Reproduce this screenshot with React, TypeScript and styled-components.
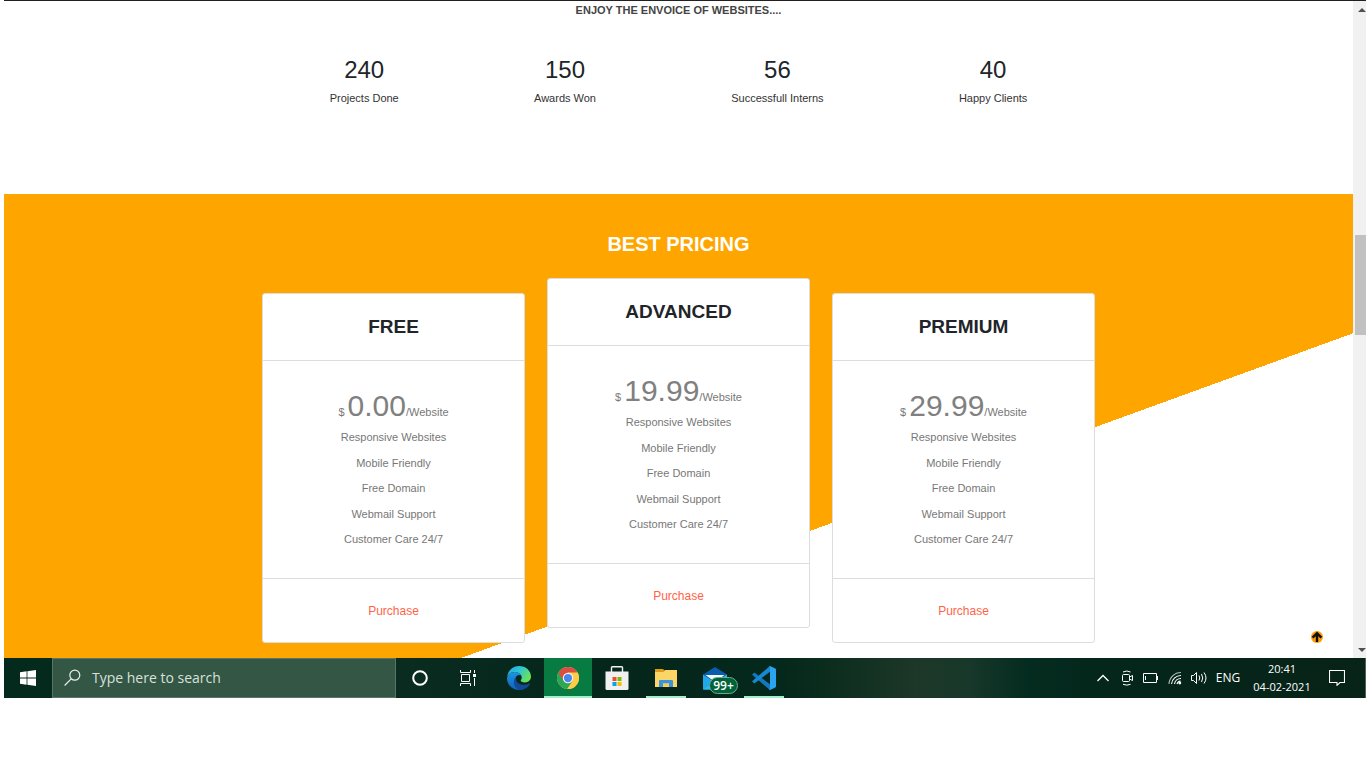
import React from "react";
import styled, { createGlobalStyle, css } from "styled-components";

const GlobalStyle = createGlobalStyle`
  *, *::before, *::after { box-sizing: border-box; }
  body {
    margin: 0;
    background: #fff;
    color: #212529;
    font-family: "Liberation Sans", Arial, sans-serif;
    font-size: 11px;
    line-height: 16px;
  }
  h1, h2, h3, p, ul, dl, dd { margin: 0; padding: 0; }
  button { border: 0; padding: 0; background: none; color: inherit; font: inherit; }
  svg { display: block; }
`;

const Desktop = styled.div`
  margin-left: 4px;
`;

const Browser = styled.div`
  display: flex;
  border-top: 1px solid #231f20;
`;

const Page = styled.main`
  position: relative;
  flex: 1;
  min-width: 0;
`;

/* Stats */

const Stats = styled.section`
  padding: 1px 16px 88px;
  text-align: center;
`;

const StatsTitle = styled.h2`
  font-size: 11px;
  line-height: 16px;
  color: #444;
`;

const StatRow = styled.dl`
  display: flex;
  justify-content: space-around;
  max-width: 833px;
  margin: 36px auto 0;
`;

const Stat = styled.div`
  display: flex;
  flex-direction: column-reverse;
  gap: 4px;
`;

const StatLabel = styled.dt`
  color: #333;
`;

const StatValue = styled.dd`
  font-size: 24px;
  line-height: 32px;
`;

/* Pricing */

const Pricing = styled.section`
  padding: 36px 16px 15px;
  background: linear-gradient(160deg, #ffa500 66%, #fff 66%);
`;

const PricingTitle = styled.h2`
  margin-bottom: 20px;
  color: #fff;
  font-size: 20px;
  line-height: 28px;
  text-align: center;
`;

const Plans = styled.div`
  display: grid;
  grid-template-columns: repeat(3, 1fr);
  align-items: start;
  gap: 22px;
  max-width: 833px;
  margin: 0 auto;
`;

const PlanCard = styled.article<{ $raised?: boolean }>`
  margin-top: ${(p) => (p.$raised ? 0 : 15)}px;
  border: 1px solid #dcdddf;
  border-radius: 3px;
  background: #fff;
  text-align: center;
`;

const PlanName = styled.h3`
  padding: 20px 16px;
  border-bottom: 1px solid #dcdddf;
  font-size: 19px;
  line-height: 26px;
`;

const PlanBody = styled.div`
  padding: 25px 16px;
  color: #777;
`;

const Price = styled.p`
  color: #808080;
  font-size: 30px;
  line-height: 39px;
`;

const PriceUnit = styled.small`
  color: #777;
  font-size: 11px;
  line-height: 16px;
  white-space: pre;
`;

const Features = styled.ul`
  display: flex;
  flex-direction: column;
  height: 128px;
  list-style: none;
`;

const Feature = styled.li`
  flex: 1;
  line-height: 24px;
`;

const PlanFooter = styled.footer`
  padding: 20px 16px 19px;
  border-top: 1px solid #dcdddf;
`;

const PurchaseLink = styled.a`
  display: block;
  color: #ff6347;
  font-size: 12px;
  line-height: 24px;
  text-decoration: none;
`;

const BackToTop = styled.button`
  position: absolute;
  right: 30px;
  bottom: 15px;
  width: 12px;
  height: 12px;
  border-radius: 50%;
  background: #ff9c08;
`;

/* Window scrollbar */

const ScrollBar = styled.div`
  display: flex;
  flex-direction: column;
  width: 13px;
  padding-left: 2px;
  background: #f1f1f1;
`;

const ScrollArrow = styled.button`
  display: flex;
  align-items: center;
  justify-content: flex-end;
  height: 17px;
`;

const ScrollTrack = styled.div`
  flex: 1;
  padding-top: 217px;
`;

const ScrollThumb = styled.div`
  height: 100px;
  background: #c1c1c1;
`;

/* Taskbar */

const Taskbar = styled.footer`
  display: flex;
  height: 40px;
  border-right: 1px solid #4d6659;
  background: linear-gradient(90deg, #04291d 0%, #0a2c20 30%, #05261b 42%, #05281c 57%, #0a2c1d 60%, #1d3728 67%, #17382a 71%, #052c20 75%, #04261b 81%, #082318 100%);
  color: #fff;
  font-family: "Open Sans", "Noto Sans", sans-serif;
  font-size: 12px;
`;

const TaskButton = styled.button<{ $state?: "active" | "open"; $gap?: number }>`
  display: flex;
  align-items: center;
  justify-content: center;
  flex: none;
  position: relative;
  width: 48px;
  height: 40px;
  margin-left: ${(p) => p.$gap ?? 0}px;
  ${(p) => p.$state === "active" && css`background: #087b43;`}
  ${(p) =>
    p.$state &&
    css`
      &::after {
        content: "";
        position: absolute;
        bottom: 0;
        left: ${p.$state === "active" ? 0 : 4}px;
        right: ${p.$state === "active" ? 0 : 4}px;
        height: 2px;
        background: #a2efca;
      }
    `}
`;

const SearchBox = styled.label`
  display: flex;
  align-items: center;
  flex: none;
  gap: 10px;
  width: 344px;
  padding-left: 11px;
  border: 1px solid #597568;
  background: #345645;
`;

const SearchInput = styled.input`
  flex: 1;
  min-width: 0;
  padding: 0;
  border: 0;
  outline: 0;
  background: none;
  color: #fff;
  font-family: inherit;
  font-size: 14px;
  line-height: 20px;
  &::placeholder { color: #d8e0dc; opacity: 1; }
`;

const Badge = styled.span`
  position: absolute;
  left: 18px;
  top: 19px;
  width: 29px;
  height: 17px;
  border: 1px solid #6fa98c;
  border-radius: 9px;
  background: #006239;
  font-size: 12px;
  font-weight: 600;
  line-height: 15px;
  text-align: center;
`;

const Tray = styled.div`
  display: flex;
  align-items: center;
  margin-left: auto;
  padding-right: 10px;
`;

const TrayButton = styled.button`
  display: flex;
  align-items: center;
  justify-content: center;
  width: 24px;
  height: 40px;
`;

const Language = styled.button`
  width: 34px;
  height: 40px;
`;

const Clock = styled.time`
  width: 74px;
  font-size: 11px;
  line-height: 18px;
  text-align: center;
`;

const ActionCenter = styled(TrayButton)`
  width: 36px;
`;

const WindowsIcon = () => (
  <svg width="16" height="16" viewBox="0 0 16 16" fill="#fff">
    <path d="M0 2.2 6.6 1.3V7.6H0zM7.4 1.2 16 0V7.6H7.4zM0 8.4H6.6V14.7L0 13.8zM7.4 8.4H16V16L7.4 14.8z" />
  </svg>
);

const SearchIcon = () => (
  <svg width="18" height="18" viewBox="0 0 18 18" fill="none" stroke="#e9efec" strokeWidth="1.2">
    <circle cx="10.8" cy="6.2" r="5" />
    <path d="M7.200 9.900.6 16.500" />
  </svg>
);

const CortanaIcon = () => (
  <svg width="16" height="16" viewBox="0 0 16 16" fill="none" stroke="#fff" strokeWidth="2">
    <circle cx="8" cy="8" r="6.800" />
  </svg>
);

const TaskViewIcon = () => (
  <svg width="16" height="16" viewBox="0 0 16 16" fill="none" stroke="#fff">
    <path d="M.5 0V2.500H10.500V0M1.500 4.500H9.500V11.500H1.500zM.5 16V13.500H10.500V16M14.500 0V3M14.500 8V16" />
    <path d="M13 4H16V7H13z" fill="#fff" stroke="none" />
  </svg>
);

const EdgeIcon = () => (
  <svg width="24" height="24" viewBox="0 0 24 24">
    <defs>
      <linearGradient id="edgeTop" x1="0" y1="0" x2="1" y2=".5">
        <stop offset="0" stopColor="#2aa5e0" />
        <stop offset=".5" stopColor="#2cc5d6" />
        <stop offset="1" stopColor="#69e25b" />
      </linearGradient>
      <linearGradient id="edgeLeft" x1="0" y1="0" x2="0" y2="1">
        <stop offset="0" stopColor="#1e95dc" />
        <stop offset="1" stopColor="#0c62bd" />
      </linearGradient>
    </defs>
    <path d="M.2 11C.8 4.7 5.8 0 12 0c6.800 0 12 4.800 12 10.600 0 3.500-2.600 5.800-6 5.800-2.900 0-4.300-1-4.300-1.900 0-.8 1-1.300 1-3.100 0-3-3-5.300-7-5.300-4 0-6.700 2.300-7.500 4.900z" fill="url(#edgeTop)" />
    <path d="M0 12.300C.2 8.600 3.700 6.100 7.700 6.100c3.500 0 6 1.500 6.800 3.500-1.700-1-4.300-.6-5.500 1.300-2.300 3.700 0 11 9.300 11.400C16.500 23.500 14.400 24 12 24 5.200 24 0 18.800 0 12.300z" fill="url(#edgeLeft)" />
    <path d="M9.100 10.900C5.300 13.500 6.400 22.700 13 24c4.400-.1 7.900-2.600 9.900-5.800.3-.5-.2-.9-.7-.6-5.600 2.700-11.600.6-13.100-3.400z" fill="#114b93" />
  </svg>
);

const ChromeIcon = () => (
  <svg width="22" height="22" viewBox="0 0 24 24">
    <circle cx="12" cy="12" r="12" fill="#fbc94a" />
    <path d="M12 12 1.600 6A12 12 0 0 0 11.200 24l6-9z" fill="#2fa556" />
    <path d="M12 12 17.200 15 11.200 24H12A12 12 0 0 0 22.400 6H12z" fill="#fdcb45" />
    <path d="M1.600 6A12 12 0 0 1 22.400 6H12L6.800 15z" fill="#dc4e41" />
    <circle cx="12" cy="12" r="5.700" fill="#f3f4f6" />
    <circle cx="12" cy="12" r="4.500" fill="#4a86ee" />
  </svg>
);

const StoreIcon = () => (
  <svg width="24" height="24" viewBox="0 0 24 24">
    <path d="M6.500 6V1.500Q6.500.7 7.300.7H16.700Q17.500.7 17.500 1.500V6" fill="none" stroke="#f3f3f3" strokeWidth="1.400" />
    <path d="M.5 5.500H23.500V22.500Q23.500 24 22 24H2Q.5 24 .5 22.500z" fill="#f0f0f0" />
    <path d="M7.500 11H11.500V15H7.500z" fill="#f04f23" />
    <path d="M12.500 11H16.500V15H12.500z" fill="#7db900" />
    <path d="M7.500 16H11.500V20H7.500z" fill="#00a3ee" />
    <path d="M12.500 16H16.500V20H12.500z" fill="#ffb800" />
  </svg>
);

const FolderIcon = () => (
  <svg width="22" height="20" viewBox="0 0 22 20">
    <path d="M0 1H8L10 3V7H0z" fill="#e09a16" />
    <path d="M0 4H8.500L10 2H22V19H0z" fill="#fbd667" />
    <path d="M4 19V13Q4 12 5 12H17Q18 12 18 13V19H14V15.500H8V19z" fill="#3b93dc" />
    <path d="M8 15.500H14V18H8z" fill="#f6cb55" />
  </svg>
);

const MailIcon = () => (
  <svg width="24" height="24" viewBox="0 0 24 24">
    <path d="M0 8.500 12 1 24 8.500 12 16z" fill="#0b5cad" />
    <path d="M2.500 9H21.500L12 16z" fill="#f5f8fa" />
    <path d="M0 8.500 12 16V23.500H0z" fill="#1fa8ea" />
    <path d="M24 8.500V23.500H0z" fill="#31b9f3" />
  </svg>
);

const CodeIcon = () => (
  <svg width="24" height="24" viewBox="0 0 24 24">
    <path d="M.4 8.200 1.800 6.900Q2.400 6.500 3 6.900L18 18.300V23.700Q17.500 23.700 17 23.200L.4 8.900Q0 8.500.4 8.200z" fill="#1378bf" />
    <path d="M.4 15.800 1.800 17.100Q2.400 17.500 3 17.100L18 5.700V.3Q17.500.3 17 .8L.4 15.100Q0 15.500.4 15.800z" fill="#1687d0" />
    <path d="M17 .3Q17.500 0 18 .1L23.300 2.600Q24 3 24 3.800V20.200Q24 21 23.300 21.400L18 23.900Q17.500 24 17 23.700 18 23.500 18 22V2Q18 .5 17 .3z" fill="#29a5f0" />
  </svg>
);

const ChevronIcon = () => (
  <svg width="14" height="14" viewBox="0 0 14 14" fill="none" stroke="#fff" strokeWidth="1.300">
    <path d="M1.500 10 7 4.500 12.500 10" />
  </svg>
);

const MeetIcon = () => (
  <svg width="14" height="16" viewBox="0 0 14 16" fill="none" stroke="#fff">
    <rect x="2.500" y="4.500" width="7" height="7" rx="1" />
    <path d="M9.500 7 12.500 5.500V10.500L9.500 9M3 2Q7 0 10.500 2M3 14.300Q7 16 10.500 14.300" />
  </svg>
);

const BatteryIcon = () => (
  <svg width="16" height="10" viewBox="0 0 16 10" fill="none" stroke="#fff">
    <path d="M.5.500H13.500V9.500H.5zM14.500 3V7M2.500 3V7" />
  </svg>
);

const WifiIcon = () => (
  <svg width="14" height="14" viewBox="0 0 14 14" fill="none" stroke="#fff" strokeWidth="1.100">
    <path d="M1 13A12 12 0 0 1 13 1.500" opacity=".7" />
    <path d="M3.500 13A9.500 9.500 0 0 1 13 4.500M6.500 13A6.500 6.500 0 0 1 13 7.500M9 13A4 4 0 0 1 12.500 10" />
    <circle cx="11.800" cy="12" r="1.400" fill="#fff" stroke="none" />
  </svg>
);

const VolumeIcon = () => (
  <svg width="18" height="14" viewBox="0 0 18 14" fill="none" stroke="#fff">
    <path d="M1.500 4.500H3.500L6.500 1.500V12.500L3.500 9.500H1.500zM9 4.500Q10.500 7 9 9.500M11.500 3Q14 7 11.500 11" />
    <path d="M14 1.500Q18 7 14 12.500" />
  </svg>
);

const MessageIcon = () => (
  <svg width="16" height="16" viewBox="0 0 16 16" fill="none" stroke="#fff" strokeWidth="1.100">
    <path d="M.5.500H15.500V12.500H11L8 15.300V12.500H.5z" />
  </svg>
);

const stats = [
  { value: "240", label: "Projects Done" },
  { value: "150", label: "Awards Won" },
  { value: "56", label: "Successfull Interns" },
  { value: "40", label: "Happy Clients" },
];

const plans = [
  { name: "FREE", price: "0.00", raised: false },
  { name: "ADVANCED", price: "19.99", raised: true },
  { name: "PREMIUM", price: "29.99", raised: false },
];

const features = [
  "Responsive Websites",
  "Mobile Friendly",
  "Free Domain",
  "Webmail Support",
  "Customer Care 24/7",
];

export default function App() {
  return (
    <>
      <GlobalStyle />
      <Desktop>
        <Browser>
          <Page>
            <Stats>
              <StatsTitle>ENJOY THE ENVOICE OF WEBSITES....</StatsTitle>
              <StatRow>
                {stats.map((s) => (
                  <Stat key={s.label}>
                    <StatLabel>{s.label}</StatLabel>
                    <StatValue>{s.value}</StatValue>
                  </Stat>
                ))}
              </StatRow>
            </Stats>
            <Pricing>
              <PricingTitle>BEST PRICING</PricingTitle>
              <Plans>
                {plans.map((plan) => (
                  <PlanCard key={plan.name} $raised={plan.raised}>
                    <PlanName>{plan.name}</PlanName>
                    <PlanBody>
                      <Price>
                        <PriceUnit>{"$ "}</PriceUnit>
                        {plan.price}
                        <PriceUnit>/Website</PriceUnit>
                      </Price>
                      <Features>
                        {features.map((f) => (
                          <Feature key={f}>{f}</Feature>
                        ))}
                      </Features>
                    </PlanBody>
                    <PlanFooter>
                      <PurchaseLink href="#purchase">Purchase</PurchaseLink>
                    </PlanFooter>
                  </PlanCard>
                ))}
              </Plans>
            </Pricing>
            <BackToTop aria-label="Back to top">
              <svg width="12" height="12" viewBox="0 0 12 12" fill="none" stroke="#111" strokeWidth="2.400">
                <path d="M6 11V2.500M1.600 6.700 6 2.300 10.400 6.700" />
              </svg>
            </BackToTop>
          </Page>
          <ScrollBar>
            <ScrollArrow aria-label="Scroll up">
              <svg width="8" height="4" viewBox="0 0 8 4" fill="#505050">
                <path d="M0 4 4 0 8 4z" />
              </svg>
            </ScrollArrow>
            <ScrollTrack>
              <ScrollThumb />
            </ScrollTrack>
            <ScrollArrow aria-label="Scroll down">
              <svg width="8" height="4" viewBox="0 0 8 4" fill="#505050">
                <path d="M0 0H8L4 4z" />
              </svg>
            </ScrollArrow>
          </ScrollBar>
        </Browser>
        <Taskbar>
          <TaskButton aria-label="Start"><WindowsIcon /></TaskButton>
          <SearchBox>
            <SearchIcon />
            <SearchInput type="text" aria-label="Search" placeholder="Type here to search" />
          </SearchBox>
          <TaskButton aria-label="Cortana"><CortanaIcon /></TaskButton>
          <TaskButton aria-label="Task view"><TaskViewIcon /></TaskButton>
          <TaskButton aria-label="Edge" $gap={3}><EdgeIcon /></TaskButton>
          <TaskButton aria-label="Chrome" $state="active" $gap={1}><ChromeIcon /></TaskButton>
          <TaskButton aria-label="Store" $gap={1}><StoreIcon /></TaskButton>
          <TaskButton aria-label="File Explorer" $state="open" $gap={1}><FolderIcon /></TaskButton>
          <TaskButton aria-label="Mail" $gap={1}>
            <MailIcon />
            <Badge>99+</Badge>
          </TaskButton>
          <TaskButton aria-label="Visual Studio Code" $state="open" $gap={1}><CodeIcon /></TaskButton>
          <Tray>
            <TrayButton aria-label="Hidden icons"><ChevronIcon /></TrayButton>
            <TrayButton aria-label="Meet now"><MeetIcon /></TrayButton>
            <TrayButton aria-label="Battery"><BatteryIcon /></TrayButton>
            <TrayButton aria-label="Network"><WifiIcon /></TrayButton>
            <TrayButton aria-label="Volume"><VolumeIcon /></TrayButton>
            <Language>ENG</Language>
            <Clock>20:41<br />04-02-2021</Clock>
            <ActionCenter aria-label="Notifications"><MessageIcon /></ActionCenter>
          </Tray>
        </Taskbar>
      </Desktop>
    </>
  );
}
